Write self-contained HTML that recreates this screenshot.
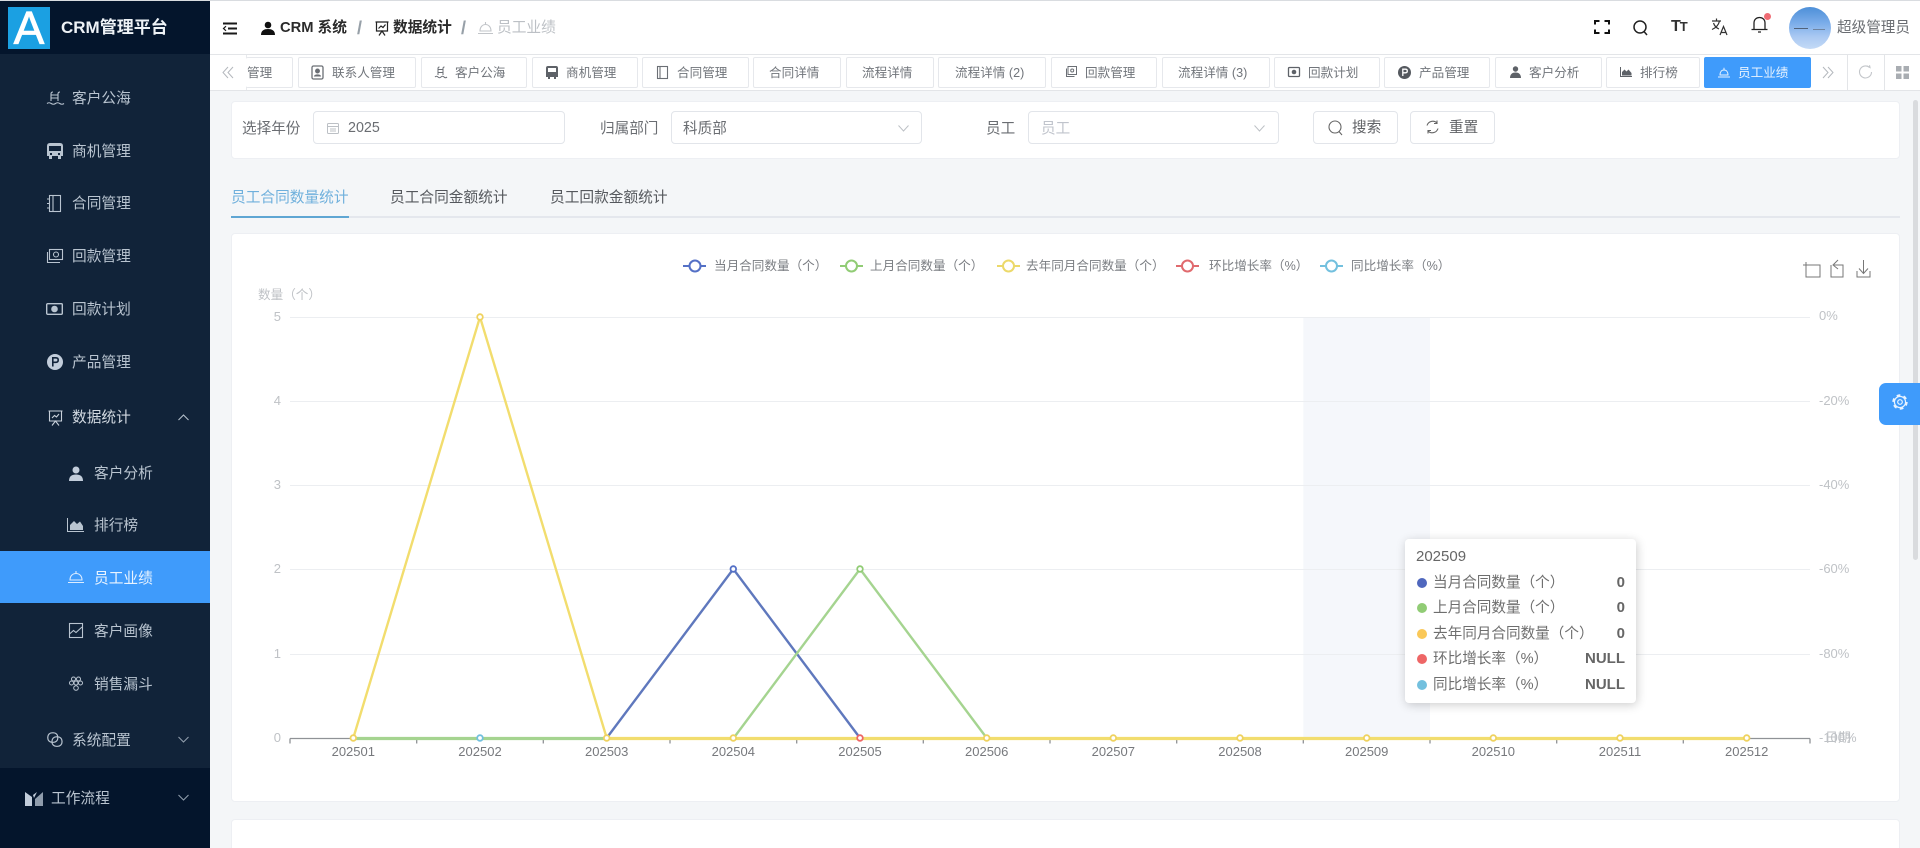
<!DOCTYPE html>
<html lang="zh-CN"><head><meta charset="utf-8"><title>CRM管理平台</title>
<style>
*{box-sizing:border-box}
html,body{margin:0;padding:0;width:1920px;height:848px;overflow:hidden;background:#f4f6f8;font-family:"Liberation Sans","Noto Sans CJK SC",sans-serif;color:#606266}
body{position:relative}
.a{position:absolute;white-space:nowrap}
.t{position:absolute;white-space:nowrap;line-height:20px;height:20px}
svg{position:absolute;overflow:visible;fill:none}
#side{position:absolute;left:0;top:0;width:210px;height:848px;background:#112339}
.m{position:absolute;left:72px;font-size:14.7px;line-height:20px;color:#b9c4d0;white-space:nowrap}
.s{left:94px}
.tab{position:absolute;top:57px;height:31px;background:#fff;border:1px solid #e6e8ec;border-radius:2px}
.tl{position:absolute;top:63px;font-size:12.6px;line-height:20px;color:#71757b;white-space:nowrap}
.card{position:absolute;background:#fff;border:1px solid #edeff3;border-radius:4px}
.inp{position:absolute;top:111px;height:33px;background:#fff;border:1px solid #e2e5ea;border-radius:4px}
.lb{position:absolute;top:119px;font-size:14.6px;line-height:20px;color:#6a6d72;white-space:nowrap}
</style></head><body>
<div class="a" style="left:0;top:0;width:1920px;height:1px;background:#d9dce0;z-index:5"></div>

<!-- header -->
<div class="a" style="left:210px;top:1px;width:1710px;height:53px;background:#fff"></div>
<div class="a" style="left:210px;top:54px;width:1710px;height:1px;background:#e3e5e8"></div>
<svg style="left:223px;top:22px" width="14" height="13" stroke="#1a1a1a" stroke-width="2"><path d="M0 1.5H14M5 6.5H14M0 11.5H14"/><path d="M3 4.2L.5 6.5 3 8.8" stroke-width="1.2"/></svg>
<svg style="left:261px;top:21px" width="14" height="14"><circle cx="7" cy="4" r="3.3" fill="#111"/><path d="M0 14C0 9.5 3 8 7 8s7 1.5 7 6z" fill="#111"/></svg>
<div class="t" style="left:280px;top:18px;font-size:14.7px;font-weight:700;color:#2a2a2a">CRM 系统</div>
<div class="t" style="left:357px;top:18px;font-size:18px;color:#97a0a8;font-weight:700">/</div>
<svg style="left:375px;top:21px" width="14" height="15" stroke="#222" stroke-width="1.2"><path d="M.5 1H13.5M1.5 1V10H12.5V1M4 14.5L7 10 10 14.5M3.500 7.5L6 5 8 6.5 10.5 3.5"/></svg>
<div class="t" style="left:393px;top:18px;font-size:14.7px;font-weight:700;color:#2a2a2a">数据统计</div>
<div class="t" style="left:461px;top:18px;font-size:18px;color:#97a0a8;font-weight:700">/</div>
<svg style="left:478px;top:21px" width="15" height="14" stroke="#c2c5c9" stroke-width="1.1"><path d="M2 10C2 6 4.5 3.5 7.5 3.5S13 6 13 10zM0 12.5H15M7.5 1V3.5"/></svg>
<div class="t" style="left:497px;top:18px;font-size:14.7px;color:#bcc0c5">员工业绩</div>

<svg style="left:1595px;top:20px" width="14" height="14" stroke="#111" stroke-width="2"><path d="M0 4.5V1H4.5M9.5 1H14V4.5M14 9.5V13H9.5M4.5 13H0V9.5"/></svg>
<svg style="left:1633px;top:20px" width="15" height="15" stroke="#222" stroke-width="1.5"><circle cx="7" cy="7" r="6"/><path d="M11 11.5L14 15"/></svg>
<div class="t" style="left:1671px;top:17px;font-size:16px;font-weight:700;color:#333;letter-spacing:-1px">T<span style="font-size:13px">T</span></div>
<svg style="left:1711px;top:18px" width="17" height="18" stroke="#333" stroke-width="1.2"><path d="M1 3H10M5.5 .5V3M8.5 3C7.5 7.5 4.5 10 1 11.5M2.5 5C3.5 8 5.5 10 8 11M9 17L12.5 8.5 16 17M10.5 14.5H14.5"/></svg>
<svg style="left:1751px;top:16px" width="17" height="18" stroke="#222" stroke-width="1.3"><path d="M3 13V7C3 3.5 5.5 1.500 8.5 1.5S14 3.5 14 7V13M.5 13.5H16.5M7 16H10"/></svg>
<div class="a" style="left:1764px;top:13px;width:7px;height:7px;border-radius:50%;background:#ef6c74"></div>
<div class="a" style="left:1789px;top:7px;width:42px;height:42px;border-radius:50%;background:linear-gradient(180deg,#4d8fd8 0%,#7daeea 40%,#a9c8f2 70%,#c4daf6 100%)"></div>
<div class="a" style="left:1794px;top:28px;width:14px;height:1px;background:#50627a"></div>
<div class="a" style="left:1813px;top:29px;width:12px;height:1px;background:#6f84a0"></div>
<div class="t" style="left:1837px;top:18px;font-size:14.6px;color:#6a6d72">超级管理员</div>

<!-- tabs bar -->
<div class="a" style="left:210px;top:55px;width:1710px;height:36px;background:#fff;border-bottom:1px solid #e3e5e8"></div>
<svg style="left:222px;top:66px" width="12" height="13" stroke="#b4b8bd" stroke-width="1"><path d="M6 1L1 6.5 6 12M11 1L6 6.5 11 12"/></svg>
<div class="a" style="left:246px;top:55px;width:1px;height:35px;background:#e8eaed"></div>
<div class="tab" style="left:246px;width:47px;border-left:0"></div><div class="tl" style="left:247px">管理</div>
<div class="tab" style="left:298px;width:118px"></div><div class="tl" style="left:332px">联系人管理</div>
<svg style="left:311px;top:65px" width="13" height="15" stroke="#6b6f75" stroke-width="1.3"><rect x="1" y="1" width="11" height="13" rx="1.5"/><circle cx="6.5" cy="6" r="1.8" fill="#6b6f75"/><path d="M3.5 11.5C4 9.5 9 9.500 9.5 11.5" fill="#6b6f75"/></svg>
<div class="tab" style="left:421px;width:106px"></div><div class="tl" style="left:455px">客户公海</div>
<svg style="left:435px;top:66px" width="12" height="12" stroke="#6b6f75" stroke-width="1"><path d="M3 9V2.500Q3 1 4.500 1M8 9V2.500Q8 1 9.500 1M3 3.500H8M3 6.500H8M0 11Q1.500 9.500 3 11T6 11 9 11 12 11"/></svg>
<div class="tab" style="left:532px;width:106px"></div><div class="tl" style="left:566px">商机管理</div>
<svg style="left:546px;top:65px" width="12" height="15"><path d="M2 1H10Q12 1 12 3V12H10V14H8V12H4V14H2V12H0V3Q0 1 2 1ZM2 3V7H10V3Z" fill="#5e6268"/></svg>
<div class="tab" style="left:642px;width:107px"></div><div class="tl" style="left:677px">合同管理</div>
<svg style="left:657px;top:66px" width="11" height="13" stroke="#6b6f75" stroke-width="1.1"><rect x=".5" y=".5" width="10" height="12"/><path d="M3 .5V12.5"/></svg>
<div class="tab" style="left:753px;width:88px"></div><div class="tl" style="left:769px">合同详情</div>
<div class="tab" style="left:846px;width:88px"></div><div class="tl" style="left:862px">流程详情</div>
<div class="tab" style="left:938px;width:108px"></div><div class="tl" style="left:955px">流程详情 (2)</div>
<div class="tab" style="left:1051px;width:106px"></div><div class="tl" style="left:1085px">回款管理</div>
<svg style="left:1066px;top:66px" width="11" height="11" stroke="#6b6f75" stroke-width="1"><rect x="2" y=".5" width="8.5" height="8"/><path d="M.5 2.500V10.5H8.5"/><circle cx="6.2" cy="4.5" r="1.5"/></svg>
<div class="tab" style="left:1162px;width:108px"></div><div class="tl" style="left:1178px">流程详情 (3)</div>
<div class="tab" style="left:1274px;width:106px"></div><div class="tl" style="left:1308px">回款计划</div>
<svg style="left:1288px;top:67px" width="12" height="10"><rect x=".5" y=".5" width="11" height="9" rx="1" stroke="#5e6268" stroke-width="1.3"/><circle cx="6" cy="5" r="2.3" fill="#5e6268"/></svg>
<div class="tab" style="left:1384px;width:106px"></div><div class="tl" style="left:1419px">产品管理</div>
<svg style="left:1398px;top:66px" width="13" height="13"><circle cx="6.5" cy="6.5" r="6.5" fill="#55595f"/><path d="M4.8 10V3.200H7.5Q9.300 3.200 9.300 5T7.5 6.8H4.8" stroke="#fff" stroke-width="1.3"/></svg>
<div class="tab" style="left:1495px;width:107px"></div><div class="tl" style="left:1529px">客户分析</div>
<svg style="left:1510px;top:66px" width="11" height="12"><circle cx="5.5" cy="3" r="2.7" fill="#5e6268"/><path d="M0 12C0 8 2.500 6.500 5.5 6.5S11 8 11 12z" fill="#5e6268"/></svg>
<div class="tab" style="left:1606px;width:94px"></div><div class="tl" style="left:1640px">排行榜</div>
<svg style="left:1620px;top:67px" width="12" height="10"><path d="M.5 0V9.5H12" stroke="#5e6268"/><path d="M2 8.5V5L4.5 2.500 6.5 4.500 8.5 2.500 11.5 6V8.5z" fill="#5e6268"/></svg>
<div class="tab" style="left:1704px;width:107px;background:#3f9bfb;border-color:#3f9bfb"></div><div class="tl" style="left:1738px;color:#e8f3ff">员工业绩</div>
<svg style="left:1718px;top:67px" width="12" height="11" stroke="#e8f3ff" stroke-width="1"><path d="M2 8C2 5 3.5 3 6 3S10 5 10 8zM0 10H12M6 .8V3"/></svg>
<svg style="left:1822px;top:66px" width="12" height="13" stroke="#b4b8bd" stroke-width="1"><path d="M1 1L6 6.5 1 12M6 1L11 6.5 6 12"/></svg>
<div class="a" style="left:1847px;top:55px;width:1px;height:35px;background:#e3e5e8"></div>
<svg style="left:1859px;top:65px" width="13" height="14" stroke="#c3c6ca" stroke-width="1.1"><path d="M10.5 2.5A6 6 0 1 0 12.5 7M8 .8L11 2.500 10.5 .2"/></svg>
<div class="a" style="left:1884px;top:55px;width:1px;height:35px;background:#e3e5e8"></div>
<svg style="left:1896px;top:66px" width="13" height="13"><rect width="5.5" height="5.5" fill="#a9adb2"/><rect x="7.5" width="5.5" height="5.5" fill="#a9adb2"/><rect y="7.5" width="5.5" height="5.5" fill="#a9adb2"/><rect x="7.5" y="7.5" width="5.5" height="5.5" fill="#a9adb2"/></svg>

<!-- filter card -->
<div class="card" style="left:231px;top:101px;width:1669px;height:58px"></div>
<div class="lb" style="left:242px">选择年份</div>
<div class="inp" style="left:313px;width:252px"></div>
<svg style="left:327px;top:122px" width="12" height="12" stroke="#bcc0c5" stroke-width="1"><rect x=".5" y="1.5" width="11" height="10" rx="1"/><path d="M.5 4.5H11.5M3 7H9M3 9H9"/></svg>
<div class="t" style="left:348px;top:118px;font-size:14.3px;color:#6a6d72">2025</div>
<div class="lb" style="left:600px">归属部门</div>
<div class="inp" style="left:671px;width:251px"></div>
<div class="t" style="left:683px;top:119px;font-size:14.6px;color:#6a6d72">科质部</div>
<svg style="left:898px;top:125px" width="11" height="7" stroke="#bcc0c5"><path d="M.5 .5L5.5 6 10.5 .5"/></svg>
<div class="lb" style="left:986px">员工</div>
<div class="inp" style="left:1028px;width:251px"></div>
<div class="t" style="left:1041px;top:119px;font-size:14.6px;color:#c0c4cc">员工</div>
<svg style="left:1254px;top:125px" width="11" height="7" stroke="#bcc0c5"><path d="M.5 .5L5.5 6 10.5 .5"/></svg>
<div class="inp" style="left:1313px;width:85px"></div>
<svg style="left:1328px;top:120px" width="15" height="15" stroke="#666" stroke-width="1.1"><circle cx="7" cy="7" r="6"/><path d="M11 11.5L14 15"/></svg>
<div class="t" style="left:1352px;top:118px;font-size:14.6px;color:#606266">搜索</div>
<div class="inp" style="left:1410px;width:85px"></div>
<svg style="left:1426px;top:120px" width="13" height="14" stroke="#666" stroke-width="1.1"><path d="M1 5.500A6 6 0 0 1 11 3M12 8.5A6 6 0 0 1 2 11M11 .5V3.5H8M2 13.5V10.5H5"/></svg>
<div class="t" style="left:1449px;top:118px;font-size:14.6px;color:#606266">重置</div>

<!-- tabs -->
<div class="t" style="left:231px;top:187.5px;font-size:14.7px;color:#6fb0dc">员工合同数量统计</div>
<div class="t" style="left:390px;top:187.5px;font-size:14.7px;color:#55585d">员工合同金额统计</div>
<div class="t" style="left:550px;top:187.5px;font-size:14.7px;color:#55585d">员工回款金额统计</div>
<div class="a" style="left:231px;top:216px;width:1669px;height:2px;background:#e4e7ed"></div>
<div class="a" style="left:231px;top:216px;width:118px;height:2px;background:#5fa6d3"></div>

<!-- chart card -->
<div class="card" style="left:231px;top:233px;width:1669px;height:569px"></div>
<div class="card" style="left:231px;top:819px;width:1669px;height:40px"></div>

<svg style="left:0;top:0" width="1920" height="848" viewBox="0 0 1920 848">
<g font-family="'Liberation Sans','Noto Sans CJK SC',sans-serif" font-size="12.6" fill="#7a7d82">
<g stroke-width="2" fill="#fff">
<path d="M683 266H706" stroke="#5470c6"/><circle cx="695" cy="266" r="5.5" stroke="#5470c6"/>
<path d="M840 266H863" stroke="#91cc75"/><circle cx="851.5" cy="266" r="5.5" stroke="#91cc75"/>
<path d="M997 266H1020" stroke="#ecd96a"/><circle cx="1008.5" cy="266" r="5.5" stroke="#ecd96a"/>
<path d="M1176 266H1199" stroke="#e06a6e"/><circle cx="1187.5" cy="266" r="5.5" stroke="#e06a6e"/>
<path d="M1320 266H1343" stroke="#73c0de"/><circle cx="1331.5" cy="266" r="5.5" stroke="#73c0de"/>
</g>
<text x="714" y="270">当月合同数量（个）</text>
<text x="870" y="270">上月合同数量（个）</text>
<text x="1026" y="270">去年同月合同数量（个）</text>
<text x="1209" y="270">环比增长率（%）</text>
<text x="1351" y="270">同比增长率（%）</text>
</g>
<g stroke="#777" stroke-width="1" fill="none">
<path d="M1803 265H1809M1806 262V268M1806 265V277H1820V265H1809"/>
<path d="M1831 265V277H1843V265H1834M1838 260L1833 265 1838 269"/>
<path d="M1857 271V277H1870V271M1863.5 260V273M1859 268.5L1863.5 273.5 1868 268.5"/>
</g>
<rect x="1303.3" y="317" width="126.7" height="421" fill="#f5f7fb"/>
<g stroke="#eceef1" stroke-width="1">
<path d="M290 317.5H1810M290 401.5H1810M290 485.5H1810M290 569.5H1810M290 654.5H1810"/>
</g>
<g font-family="'Liberation Sans','Noto Sans CJK SC',sans-serif" font-size="13" fill="#bfc2c6">
<text x="258" y="299" font-size="12.6">数量（个）</text>
<g text-anchor="end"><text x="281" y="321">5</text><text x="281" y="405">4</text><text x="281" y="489">3</text><text x="281" y="573">2</text><text x="281" y="658">1</text><text x="281" y="742">0</text></g>
<text x="1819" y="320">0%</text><text x="1819" y="405">-20%</text><text x="1819" y="489">-40%</text><text x="1819" y="573">-60%</text><text x="1819" y="658">-80%</text><text x="1819" y="742">-100%</text><text x="1825" y="742">日期</text>
</g>
<path d="M290 738.5H1810M290 738.5v5M416.7 738.5v5M543.3 738.5v5M670 738.5v5M796.7 738.5v5M923.3 738.5v5M1050 738.5v5M1176.7 738.5v5M1303.3 738.5v5M1430 738.5v5M1556.7 738.5v5M1683.3 738.5v5M1810 738.5v5" stroke="#8f9296" stroke-width="1.3"/>
<g font-family="'Liberation Sans',sans-serif" font-size="13" fill="#77797d" text-anchor="middle">
<text x="353.3" y="756">202501</text><text x="480" y="756">202502</text><text x="606.7" y="756">202503</text><text x="733.3" y="756">202504</text><text x="860" y="756">202505</text><text x="986.7" y="756">202506</text><text x="1113.3" y="756">202507</text><text x="1240" y="756">202508</text><text x="1366.7" y="756">202509</text><text x="1493.3" y="756">202510</text><text x="1620" y="756">202511</text><text x="1746.7" y="756">202512</text>
</g>
<path d="M606.7 738L733.3 569 860 738" stroke="#5f78bd" stroke-width="2.4"/>
<path d="M353.3 738.500H733.3L860 569 986.7 738" stroke="#a5d490" stroke-width="2.4"/>
<path d="M353.3 738.5H606.7" stroke="#a5d490" stroke-width="3.2"/>
<path d="M353.3 738L480 317 606.7 738" stroke="#f2dd6e" stroke-width="2.4"/>
<path d="M606.7 738.5H1746.7" stroke="#f2dd6e" stroke-width="3.2"/>
<g fill="#fff" stroke-width="1.8">
<circle cx="733.3" cy="569" r="2.8" stroke="#5470c6"/>
<circle cx="860" cy="569" r="2.8" stroke="#91cc75"/>
<g stroke="#efd25f"><circle cx="353.3" cy="738" r="2.8"/><circle cx="480" cy="317" r="2.8"/><circle cx="606.7" cy="738" r="2.8"/><circle cx="733.3" cy="738" r="2.8"/><circle cx="986.7" cy="738" r="2.8"/><circle cx="1113.3" cy="738" r="2.8"/><circle cx="1240" cy="738" r="2.8"/><circle cx="1366.7" cy="738" r="2.8"/><circle cx="1493.3" cy="738" r="2.8"/><circle cx="1620" cy="738" r="2.8"/><circle cx="1746.7" cy="738" r="2.8"/></g>
<circle cx="480" cy="738" r="2.8" stroke="#73c0de"/>
<circle cx="860" cy="738" r="2.8" stroke="#ee6666"/>
</g>
</svg>

<!-- tooltip -->
<div class="a" style="left:1405px;top:539px;width:231px;height:164px;background:#fff;border-radius:4px;box-shadow:1px 2px 10px rgba(0,0,0,.2)"></div>
<div class="t" style="left:1416px;top:547px;font-size:15px;color:#666">202509</div>
<div class="a" style="left:1416.5px;top:578px;width:10px;height:10px;border-radius:50%;background:#4f67bd"></div>
<div class="t" style="left:1433px;top:573px;font-size:14.6px;color:#6e6e6e">当月合同数量（个）</div><div class="t" style="right:295px;top:573px;font-size:15px;font-weight:700;color:#666">0</div>
<div class="a" style="left:1416.5px;top:603px;width:10px;height:10px;border-radius:50%;background:#91cc75"></div>
<div class="t" style="left:1433px;top:598px;font-size:14.6px;color:#6e6e6e">上月合同数量（个）</div><div class="t" style="right:295px;top:598px;font-size:15px;font-weight:700;color:#666">0</div>
<div class="a" style="left:1416.5px;top:629px;width:10px;height:10px;border-radius:50%;background:#fac858"></div>
<div class="t" style="left:1433px;top:624px;font-size:14.6px;color:#6e6e6e">去年同月合同数量（个）</div><div class="t" style="right:295px;top:624px;font-size:15px;font-weight:700;color:#666">0</div>
<div class="a" style="left:1416.5px;top:654px;width:10px;height:10px;border-radius:50%;background:#ee6666"></div>
<div class="t" style="left:1433px;top:649px;font-size:14.6px;color:#6e6e6e">环比增长率（%）</div><div class="t" style="right:295px;top:649px;font-size:15px;font-weight:700;color:#666">NULL</div>
<div class="a" style="left:1416.5px;top:680px;width:10px;height:10px;border-radius:50%;background:#73c0de"></div>
<div class="t" style="left:1433px;top:675px;font-size:14.6px;color:#6e6e6e">同比增长率（%）</div><div class="t" style="right:295px;top:675px;font-size:15px;font-weight:700;color:#666">NULL</div>

<!-- scrollbar & settings -->
<div class="a" style="left:1913px;top:100px;width:5px;height:460px;background:#d9dbde;border-radius:3px"></div>
<div class="a" style="left:1879px;top:383px;width:41px;height:42px;background:#3f9bfb;border-radius:7px 0 0 7px"></div>
<svg style="left:1892px;top:394px" width="16" height="16" stroke="#e8f3ff"><circle cx="8" cy="8" r="5.6" stroke-width="1.2"/><circle cx="8" cy="8" r="2.300" stroke-width="1.2"/><circle cx="8" cy="8" r="6.800" stroke-width="1.8" stroke-dasharray="3.700 3.420"/></svg>

<!-- sidebar -->
<div id="side">
<div class="a" style="left:0;top:0;width:210px;height:54px;background:#04152c"></div>
<div class="a" style="left:8px;top:7px;width:42px;height:42px;background:#1ba0e2"></div>
<div class="a" style="left:8px;top:7px;width:42px;height:42px;text-align:center;font-size:46px;line-height:42px;color:#fff;font-weight:400;-webkit-text-stroke:.8px #fff">A</div>
<div class="t" style="left:61px;top:18px;font-size:17px;font-weight:700;color:#eef2f6">CRM管理平台</div>
<div class="a" style="left:0;top:551px;width:210px;height:52px;background:#3f9bfb"></div>
<div class="a" style="left:0;top:768px;width:210px;height:80px;background:#04152c"></div>

<div class="m" style="top:89px">客户公海</div>
<div class="m" style="top:142px">商机管理</div>
<div class="m" style="top:194px">合同管理</div>
<div class="m" style="top:247px">回款管理</div>
<div class="m" style="top:300px">回款计划</div>
<div class="m" style="top:353px">产品管理</div>
<div class="m" style="top:408px;color:#d3dae2">数据统计</div>
<div class="m s" style="top:463.5px">客户分析</div>
<div class="m s" style="top:516px">排行榜</div>
<div class="m s" style="top:568.5px;color:#eaf4ff">员工业绩</div>
<div class="m s" style="top:621.5px">客户画像</div>
<div class="m s" style="top:674.5px">销售漏斗</div>
<div class="m" style="top:730.5px">系统配置</div>
<div class="m" style="left:51px;top:788.5px">工作流程</div>

<svg style="left:47px;top:91px" width="17" height="14" stroke="#b9c4d0" stroke-width="1.1"><path d="M4 10V3Q4 1 6 1M11 10V3Q11 1 13 1M4 4H11M4 7H11M0 12.5Q2 11 4.200 12.500T8.500 12.500 12.800 12.500 17 12.500"/></svg>
<svg style="left:47px;top:142px" width="16" height="18"><path d="M3 1H13Q16 1 16 4V14H14V17H11V14H5V17H2V14H0V4Q0 1 3 1ZM2 4V9H14V4ZM3 11V13H5V11ZM11 11V13H13V11Z" fill="#b9c4d0" fill-rule="evenodd"/></svg>
<svg style="left:47px;top:195px" width="14" height="17" stroke="#b9c4d0" stroke-width="1.1"><rect x="2.5" y=".5" width="11" height="16"/><path d="M6 .5V16.5M0 4H3M0 8.5H3M0 13H3"/></svg>
<svg style="left:47px;top:249px" width="16" height="15" stroke="#b9c4d0" stroke-width="1.1"><rect x="2.5" y=".5" width="13" height="10"/><path d="M.5 3V13.5H13"/><circle cx="9" cy="5.5" r="2.5"/></svg>
<svg style="left:46px;top:303px" width="17" height="12"><rect x=".7" y=".7" width="15.6" height="10.6" rx="1" stroke="#b9c4d0" stroke-width="1.4"/><circle cx="8.5" cy="6" r="3.3" fill="#b9c4d0"/></svg>
<svg style="left:47px;top:354px" width="16" height="16"><circle cx="8" cy="8" r="8" fill="#c2cddb"/><path d="M5.8 12.5V3.8H9Q11.2 3.8 11.2 6T9 8.3H5.8" stroke="#112339" stroke-width="1.6"/></svg>
<svg style="left:48px;top:410px" width="15" height="16" stroke="#c8d0da" stroke-width="1.1"><path d="M.5 1H14.5M1.5 1V11H13.5V1M4 15.5L7.5 11 11 15.500M4 8L6.500 5.500 8.500 7 11 4"/></svg>
<svg style="left:178px;top:414px" width="11" height="7" stroke="#b9c4d0" stroke-width="1"><path d="M.5 6L5.5 1 10.5 6"/></svg>
<svg style="left:69px;top:466px" width="14" height="15"><circle cx="7" cy="4" r="3.5" fill="#c2cddb"/><path d="M0 15C0 10 3 8.5 7 8.5S14 10 14 15z" fill="#c2cddb"/></svg>
<svg style="left:67px;top:518px" width="17" height="14"><path d="M.5 0V13.5H17" stroke="#b9c4d0"/><path d="M3 12V7L7 3 10 6 13 3.5 16 8V12z" fill="#b9c4d0"/></svg>
<svg style="left:68px;top:570px" width="16" height="14" stroke="#dcecff" stroke-width="1.1"><path d="M2 10C2 6 4.5 3.5 8 3.5S14 6 14 10zM0 12.5H16M8 1V3.5"/></svg>
<svg style="left:69px;top:623px" width="14" height="15" stroke="#b9c4d0" stroke-width="1.1"><rect x=".5" y=".5" width="13" height="14"/><path d="M.5 11L4.5 7.5 7 9.5 13 4"/></svg>
<svg style="left:69px;top:676px" width="14" height="15" stroke="#b9c4d0" stroke-width="1"><circle cx="4.5" cy="3" r="2"/><circle cx="9.500" cy="3" r="2"/><circle cx="2.500" cy="7" r="2"/><circle cx="7" cy="7" r="2"/><circle cx="11.500" cy="7" r="2"/><circle cx="7" cy="12" r="2.300"/></svg>
<svg style="left:47px;top:732px" width="16" height="15" stroke="#b9c4d0" stroke-width="1.2"><rect x=".8" y=".8" width="10" height="9.500" rx="4.200"/><rect x="5" y="4.800" width="10" height="9.500" rx="4.200"/></svg>
<svg style="left:178px;top:736px" width="11" height="7" stroke="#94a1af" stroke-width="1"><path d="M.5 1L5.5 6 10.500 1"/></svg>
<svg style="left:25px;top:792px" width="18" height="14"><path d="M0 0L7 5V14H0Z" fill="#c2cddb"/><path d="M18 0L10 7V14H18Z" fill="#8f9cac"/><path d="M8 3L12 0 9 6Z" fill="#c2cddb"/></svg>
<svg style="left:178px;top:794px" width="11" height="7" stroke="#94a1af" stroke-width="1"><path d="M.5 1L5.500 6 10.500 1"/></svg>
</div>
</body></html>
